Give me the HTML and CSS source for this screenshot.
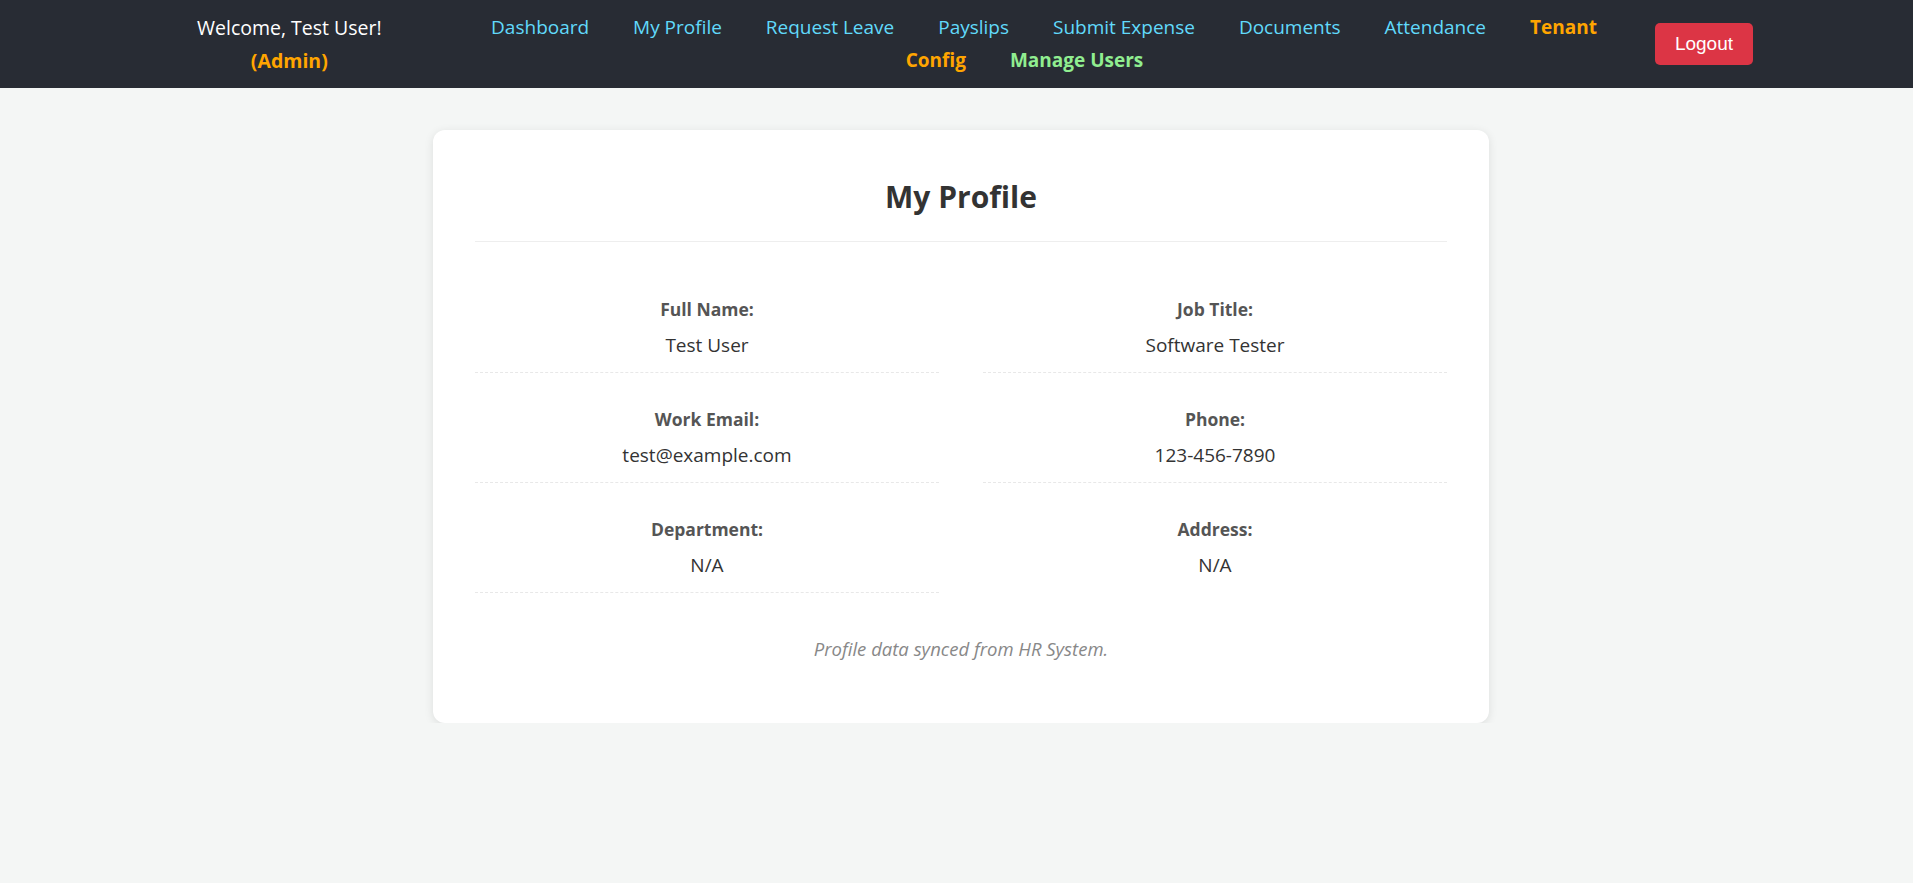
FILE: index.html
```html
<!DOCTYPE html>
<html lang="en">
<head>
<meta charset="utf-8">
<title>My Profile</title>
<link rel="stylesheet" href="styles.css">
</head>
<body>
<header class="topbar">
  <div class="welcome">Welcome, Test User!<span class="role">(Admin)</span></div>
  <nav class="nav">
    <a href="#">Dashboard</a>
    <a href="#">My Profile</a>
    <a href="#">Request Leave</a>
    <a href="#">Payslips</a>
    <a href="#">Submit Expense</a>
    <a href="#">Documents</a>
    <a href="#">Attendance</a>
    <a href="#" class="admin-link">Tenant Config</a>
    <a href="#" class="users-link">Manage Users</a>
  </nav>
  <button class="logout" type="button">Logout</button>
</header>
<main class="page">
  <section class="card">
    <h2 class="card-title">My Profile</h2>
    <div class="fields">
      <div class="field"><div class="label">Full Name:</div><div class="value">Test User</div></div>
      <div class="field"><div class="label">Job Title:</div><div class="value">Software Tester</div></div>
      <div class="field"><div class="label">Work Email:</div><div class="value">test@example.com</div></div>
      <div class="field"><div class="label">Phone:</div><div class="value">123-456-7890</div></div>
      <div class="field"><div class="label">Department:</div><div class="value">N/A</div></div>
      <div class="field field-plain"><div class="label">Address:</div><div class="value">N/A</div></div>
    </div>
    <p class="note">Profile data synced from HR System.</p>
  </section>
</main>
</body>
</html>
```

FILE: styles.css
```css
* { box-sizing: border-box; }

body {
  margin: 0;
  background: #f4f6f5;
  font-family: "Open Sans", "Noto Sans", sans-serif;
  color: #333;
}

.topbar {
  background: #282c34;
  height: 88px;
  display: flex;
  align-items: center;
  padding: 0 160px 0 197px;
}

.welcome {
  color: #fff;
  font-size: 19.5px;
  line-height: 33px;
  text-align: center;
  white-space: nowrap;
}

.role {
  display: block;
  color: #ffa500;
  font-weight: bold;
}

.nav {
  flex: 1;
  margin: 0 29px 0 61px;
  text-align: center;
  font-size: 19px;
  line-height: 33px;
}

.nav a {
  color: #61dafb;
  text-decoration: none;
  margin: 0 19.5px;
}

.nav a.admin-link {
  color: #ffa500;
  font-weight: bold;
}

.nav a.users-link {
  color: #90ee90;
  font-weight: bold;
}

.logout {
  height: 42px;
  padding: 0 20px;
  background: #dc3545;
  color: #fff;
  border: none;
  border-radius: 5px;
  font-family: "Liberation Sans", Arial, sans-serif;
  font-size: 19px;
}

.page {
  display: flex;
  justify-content: center;
  padding: 42px 0 0 9px;
}

.card {
  width: 1056px;
  background: #fff;
  border-radius: 12px;
  box-shadow: 0 2px 10px rgba(0, 0, 0, 0.1);
  padding: 42px;
}

.card-title {
  margin: 0;
  font-size: 30px;
  line-height: 40px;
  font-weight: bold;
  color: #333;
  text-align: center;
  padding: 5px 0 24px;
  border-bottom: 1px solid #eee;
}

.fields {
  display: grid;
  grid-template-columns: 1fr 1fr;
  column-gap: 44px;
  row-gap: 24px;
  margin-top: 45px;
}

.field {
  text-align: center;
  padding: 10px 0 13px;
  border-bottom: 1px dashed #e8e8e8;
}

.field-plain {
  border-bottom-color: transparent;
}

.label {
  font-size: 17.5px;
  line-height: 24px;
  font-weight: bold;
  color: #555;
}

.value {
  font-size: 19px;
  line-height: 28px;
  margin-top: 10px;
  color: #333;
}

.note {
  margin: 43px 0 19px;
  text-align: center;
  font-style: italic;
  font-size: 18.5px;
  line-height: 26px;
  color: #888;
}
```
